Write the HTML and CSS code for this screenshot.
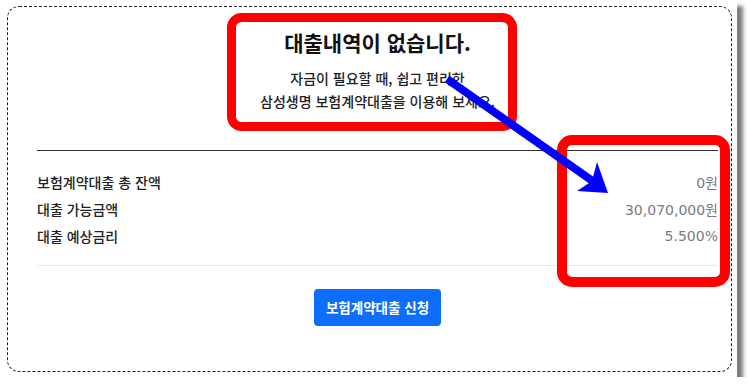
FILE: index.html
```html
<!DOCTYPE html>
<html lang="ko">
<head>
<meta charset="utf-8">
<link rel="stylesheet" href="styles.css">
</head>
<body>
<div class="frame">
  <div class="card">
    <h1 class="title">대출내역이 없습니다.</h1>
    <p class="desc">자금이 필요할 때, 쉽고 편리한<br>삼성생명 보험계약대출을 이용해 보세요.</p>
    <dl class="summary">
      <div class="row"><dt>보험계약대출 총 잔액</dt><dd>0원</dd></div>
      <div class="row"><dt>대출 가능금액</dt><dd>30,070,000원</dd></div>
      <div class="row"><dt>대출 예상금리</dt><dd>5.500%</dd></div>
    </dl>
    <div class="actions">
      <button class="btn" type="button">보험계약대출 신청</button>
    </div>
  </div>
  <svg class="marks" width="748" height="387" viewBox="0 0 748 387">
    <rect x="231.5" y="17.5" width="281" height="109" rx="10" fill="none" stroke="#ff0000" stroke-width="9"/>
    <rect x="562" y="140" width="163" height="142" rx="10" fill="none" stroke="#ff0000" stroke-width="10"/>
    <line x1="447" y1="79" x2="594" y2="182" stroke="#0000ff" stroke-width="8"/>
    <polygon points="608,193 597,162 592,181 577,191" fill="#0000ff"/>
  </svg>
</div>
</body>
</html>
```

FILE: styles.css
```css
html, body {
  margin: 0;
  padding: 0;
  background: #ffffff;
}

body {
  font-family: "Noto Sans CJK KR", "Noto Sans", sans-serif;
  color: #222222;
}

.frame {
  position: relative;
  width: 737px;
  height: 377px;
  background: #ffffff;
  box-shadow: 6px 6px 4px #7a7a7a;
}

.card {
  box-sizing: border-box;
  position: relative;
  top: 6px;
  left: 7px;
  width: 725px;
  height: 366px;
  border: 1px dashed #222222;
  border-radius: 12px;
  padding: 21px 13px 0 29px;
  display: flex;
  flex-direction: column;
}

.title {
  margin: 0;
  font-size: 21px;
  line-height: 28px;
  font-weight: 700;
  text-align: center;
  color: #111111;
}

.desc {
  margin: 11px 0 0;
  font-size: 14px;
  line-height: 23px;
  font-weight: 500;
  text-align: center;
  color: #222222;
}

.summary {
  margin: 37px 0 0;
  padding: 17px 0 16px;
  border-top: 1px solid #333333;
  border-bottom: 1px solid #e6e6e6;
}

.row {
  display: flex;
  justify-content: space-between;
  align-items: center;
  height: 27px;
}

.row dt {
  font-size: 14px;
  font-weight: 500;
  color: #222222;
}

.row dd {
  margin: 0;
  font-family: "DejaVu Sans", "Noto Sans CJK KR", sans-serif;
  font-size: 14px;
  color: #7a7a7a;
}

.actions {
  display: flex;
  justify-content: center;
  margin-top: 23px;
}

.btn {
  font-family: "Noto Sans CJK KR", sans-serif;
  font-size: 13.5px;
  font-weight: 700;
  color: #ffffff;
  background: #0d6efd;
  border: 0;
  border-radius: 4px;
  height: 37px;
  padding: 0 12px;
  line-height: 37px;
}

.marks {
  position: absolute;
  left: 0;
  top: 0;
  pointer-events: none;
}
```
